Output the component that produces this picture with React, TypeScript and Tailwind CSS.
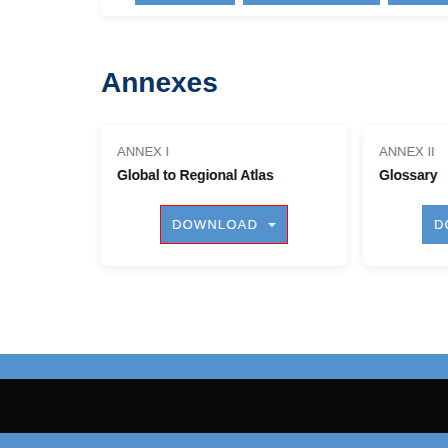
export default function App() {
  const font = { fontFamily: '"Liberation Sans", Arial, sans-serif' };
  const Card = ({ label, title, focus }: { label: string; title: string; focus?: boolean }) => (
    <div className="w-[246px] shrink-0 bg-white rounded-[5px] shadow-[0_2px_10px_rgba(0,0,0,0.08)] pt-[18px] pb-[22px] px-[16px] flex flex-col">
      <div className="text-[13px] leading-[16px] text-[#777777]">{label}</div>
      <div className="mt-[5px] text-[14px] leading-[20px] font-bold tracking-[-0.2px] text-[#1a1a1a]">{title}</div>
      <div className="mt-[20px] flex justify-center">
        <button
          className={`w-[128px] h-[39px] bg-[#5492ce] text-white text-[13px] tracking-[1.2px] flex items-center justify-center gap-[10px] border ${focus ? 'border-[#ff0000]' : 'border-[#5492ce]'}`}
        >
          <span>DOWNLOAD</span>
          <svg width="8" height="4" viewBox="0 0 8 4"><path d="M0 0 L8 0 L4 4 Z" fill="white" /></svg>
        </button>
      </div>
    </div>
  );
  return (
    <div className="w-[448px] h-[448px] overflow-hidden bg-white flex flex-col" style={font}>
      <div className="pl-[101px]">
        <div className="w-[400px] h-[16px] bg-white rounded-b-[5px] shadow-[0_2px_8px_rgba(0,0,0,0.07)] flex gap-[8px] pl-[34px]">
          <div className="w-[100px] h-[5px] bg-[#5492ce]" />
          <div className="w-[137px] h-[5px] bg-[#5492ce]" />
          <div className="w-[100px] h-[5px] bg-[#5492ce]" />
        </div>
      </div>
      <div className="pl-[101px] mt-[51px] text-[28px] leading-[32px] font-bold text-[#0a3462]">Annexes</div>
      <div className="pl-[101px] mt-[27px] flex gap-[16px]">
        <Card label="ANNEX I" title="Global to Regional Atlas" focus />
        <Card label="ANNEX II" title="Glossary" />
      </div>
      <div className="mt-[88px] h-[25px] bg-[#5492ce] shrink-0" />
      <div className="h-[54px] bg-[#0a0a0a] shrink-0" />
      <div className="h-[15px] bg-[#5492ce] shrink-0" />
    </div>
  );
}
